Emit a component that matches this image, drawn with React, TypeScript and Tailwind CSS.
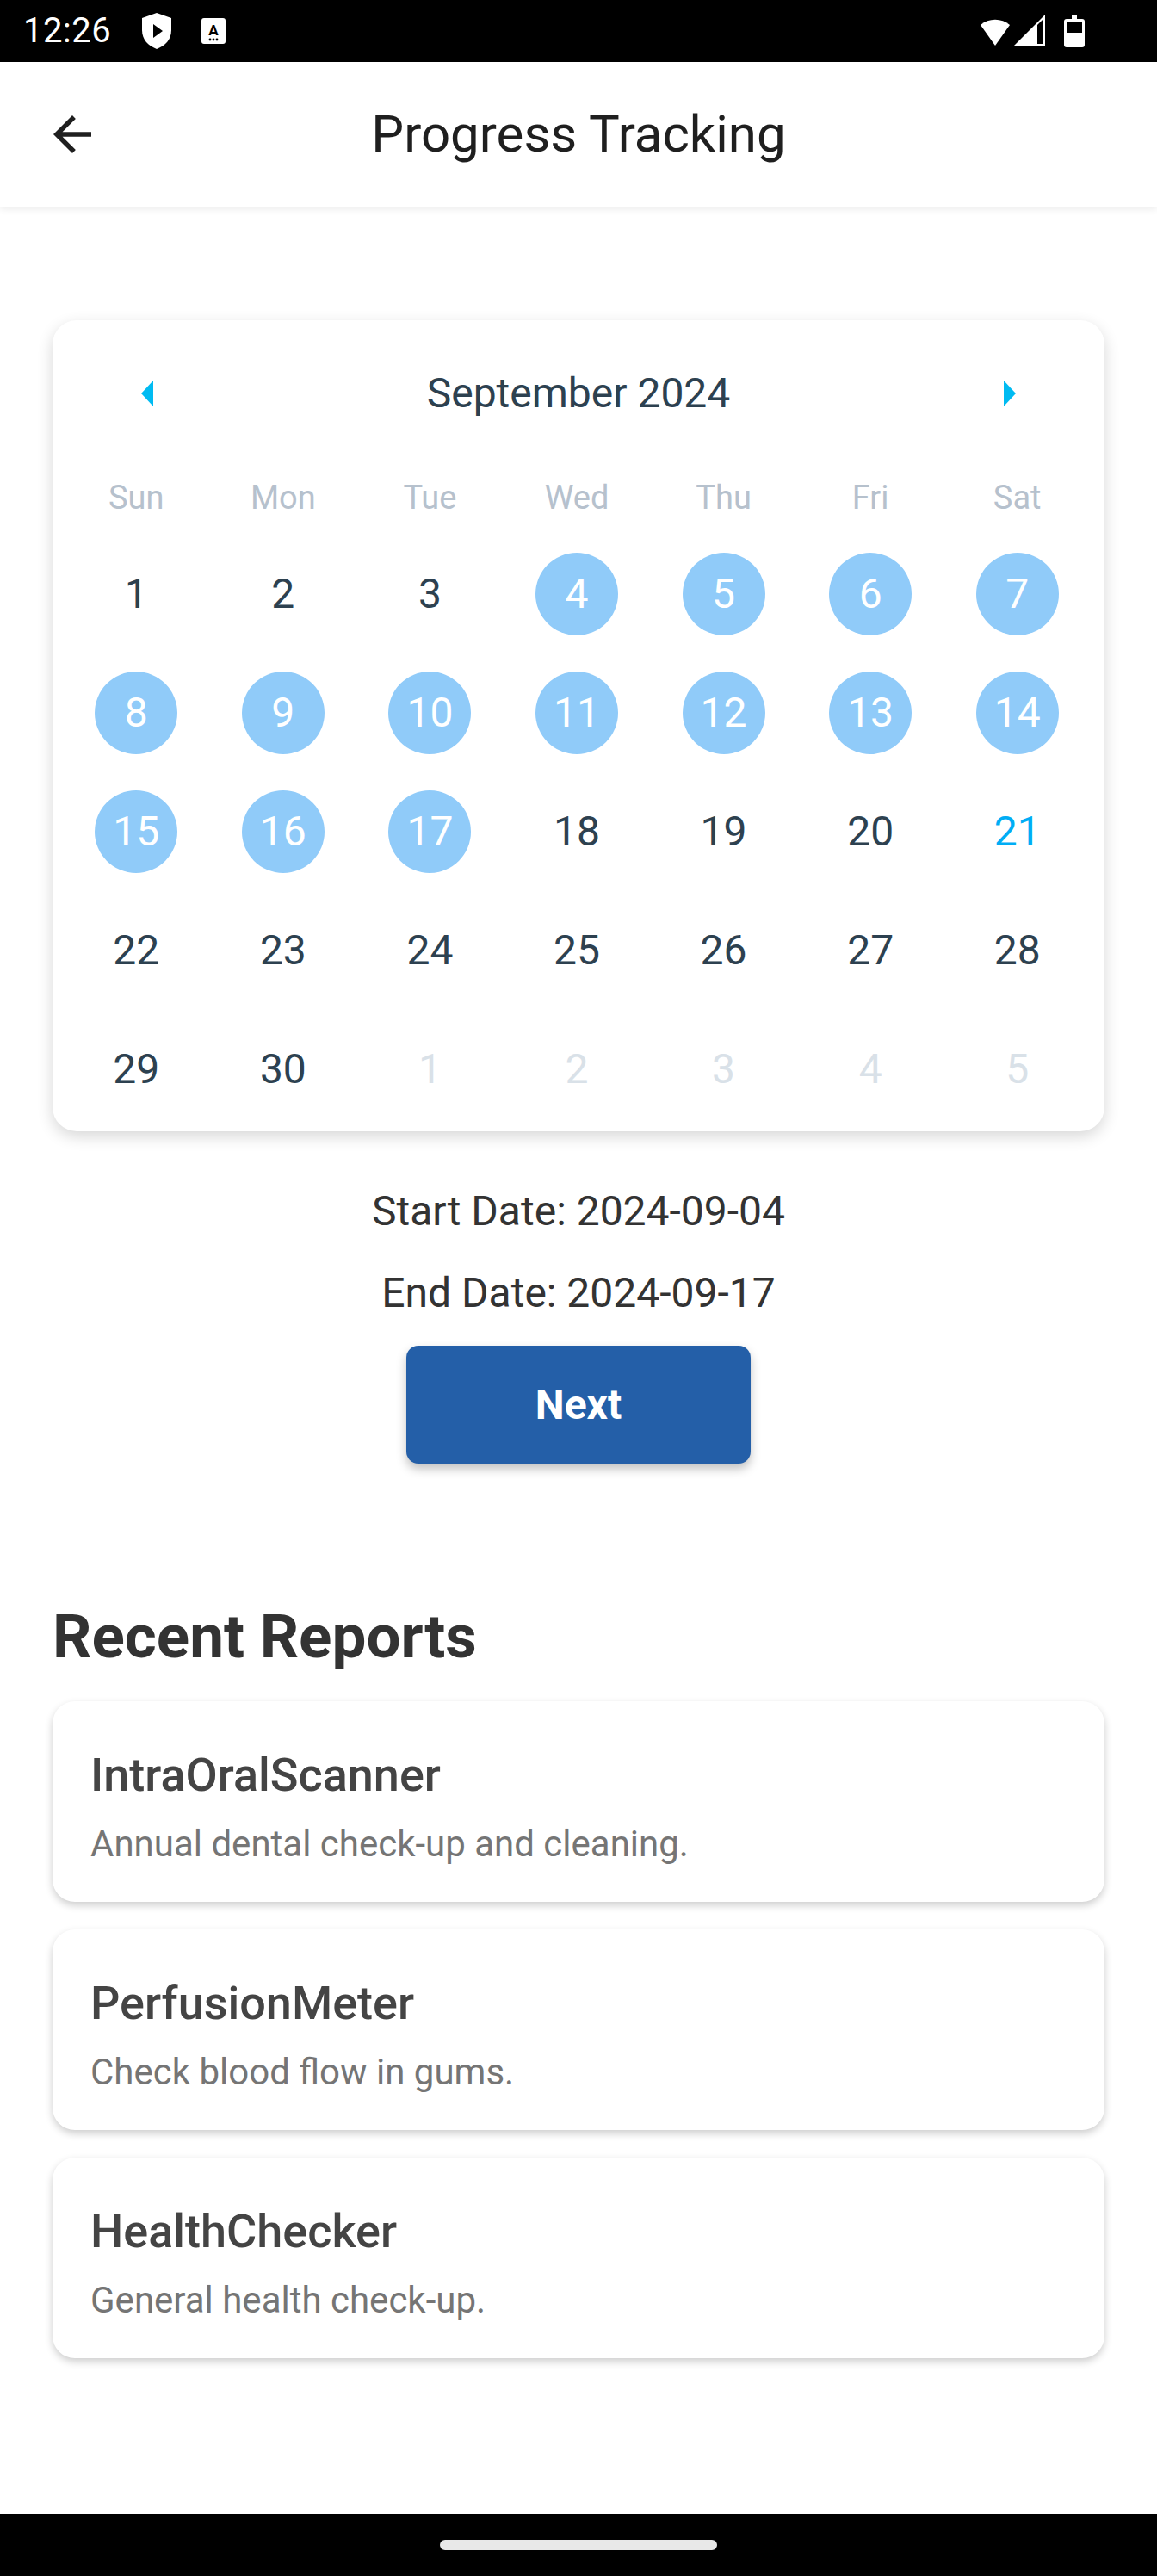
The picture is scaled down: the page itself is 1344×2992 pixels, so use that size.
import React from 'react';

const WEEKDAYS = ['Sun', 'Mon', 'Tue', 'Wed', 'Thu', 'Fri', 'Sat'];

type Day = { n: number; other?: boolean };

const WEEKS: Day[][] = [
  [1, 2, 3, 4, 5, 6, 7].map((n) => ({ n })),
  [8, 9, 10, 11, 12, 13, 14].map((n) => ({ n })),
  [15, 16, 17, 18, 19, 20, 21].map((n) => ({ n })),
  [22, 23, 24, 25, 26, 27, 28].map((n) => ({ n })),
  [{ n: 29 }, { n: 30 }, { n: 1, other: true }, { n: 2, other: true }, { n: 3, other: true }, { n: 4, other: true }, { n: 5, other: true }],
];

const REPORTS = [
  { title: 'IntraOralScanner', description: 'Annual dental check-up and cleaning.' },
  { title: 'PerfusionMeter', description: 'Check blood flow in gums.' },
  { title: 'HealthChecker', description: 'General health check-up.' },
];

const START = 4;
const END = 17;
const TODAY = 21;

const StatusBar: React.FC = () => (
  <div className="h-[72px] bg-black flex items-center pl-[27px] pr-[84px] text-white">
    <span className="text-[40px] leading-none tracking-[0.5px]">12:26</span>
    {/* shield / play */}
    <svg width="34" height="42" viewBox="0 0 34 42" className="ml-[36px]">
      <path d="M17 0 L34 6 V20 C34 31 27 38 17 42 C7 38 0 31 0 20 V6 Z" fill="#fff" />
      <path d="M13 13 L24 21 L13 29 Z" fill="#000" />
    </svg>
    {/* accessibility A box */}
    <svg width="28" height="30" viewBox="0 0 28 30" className="ml-[35px]">
      <rect x="0" y="0" width="28" height="30" rx="3" fill="#fff" />
      <text x="14" y="20" textAnchor="middle" fontFamily="Roboto, sans-serif" fontWeight="700" fontSize="17" fill="#000">A</text>
      <circle cx="10" cy="25" r="1.4" fill="#000" />
      <circle cx="14" cy="25" r="1.4" fill="#000" />
      <circle cx="18" cy="25" r="1.4" fill="#000" />
    </svg>
    <div className="flex-1" />
    {/* wifi */}
    <svg width="34" height="36" viewBox="0 0 34 36">
      <path d="M17 35 L0 11 A26 26 0 0 1 34 11 Z" fill="#fff" />
    </svg>
    {/* signal */}
    <svg width="38" height="38" viewBox="0 0 38 38" className="ml-[4px]">
      <path d="M37 0 V37 H0 Z" fill="#fff" />
      <path d="M28 12 L34 6 V34 H28 Z" fill="#000" />
    </svg>
    {/* battery */}
    <svg width="24" height="38" viewBox="0 0 24 38" className="ml-[21px]">
      <rect x="9" y="0" width="6" height="6" fill="#fff" />
      <rect x="0" y="5" width="24" height="33" rx="3" fill="#fff" />
      <rect x="3" y="8" width="18" height="13" fill="#000" />
    </svg>
  </div>
);

const AppBar: React.FC = () => (
  <div className="h-[168px] bg-white grid grid-cols-[1fr_auto_1fr] items-center shadow-[0_3px_8px_rgba(0,0,0,0.08)] relative z-10">
    <div className="pl-[51px]">
      <svg width="66" height="66" viewBox="0 0 24 24" fill="#1f1f1f">
        <path d="M20 11H7.83l5.59-5.59L12 4l-8 8 8 8 1.41-1.41L7.83 13H20v-2z" />
      </svg>
    </div>
    <h1 className="text-[60px] text-[#1f1f1f] leading-none">Progress Tracking</h1>
    <div />
  </div>
);

const Calendar: React.FC = () => (
  <div className="bg-white rounded-[28px] shadow-[0_6px_18px_rgba(0,0,0,0.16)] pl-[12px] pr-[16px] pt-[37px] pb-[24px]">
    <div className="h-[96px] flex items-center justify-between pl-[84px] pr-[80px]">
      <div className="w-[28px] flex justify-center">
        <svg width="14" height="30" viewBox="0 0 14 30">
          <path d="M14 0 V30 L0 15 Z" fill="#00bbf2" />
        </svg>
      </div>
      <span className="text-[48px] text-[#2d4150] leading-none">September 2024</span>
      <div className="w-[28px] flex justify-center">
        <svg width="14" height="30" viewBox="0 0 14 30">
          <path d="M0 0 V30 L14 15 Z" fill="#00bbf2" />
        </svg>
      </div>
    </div>
    <div className="grid grid-cols-7 mt-[51px] h-[44px] items-center">
      {WEEKDAYS.map((d) => (
        <div key={d} className="text-center text-[38px] leading-none text-[#b6c1cd]">{d}</div>
      ))}
    </div>
    <div className="flex flex-col gap-[42px] mt-[42px]">
      {WEEKS.map((week, wi) => (
        <div key={wi} className="grid grid-cols-7 h-[96px]">
          {week.map((day, di) => {
            const selected = !day.other && day.n >= START && day.n <= END;
            const isToday = !day.other && day.n === TODAY;
            return (
              <div key={di} className="flex items-center justify-center">
                {selected ? (
                  <div className="w-[96px] h-[96px] rounded-full bg-[#90cbf9] flex items-center justify-center text-white text-[48px] leading-none">
                    {day.n}
                  </div>
                ) : (
                  <span
                    className={
                      day.other
                        ? 'text-[48px] leading-none text-[#d9e1e8]'
                        : isToday
                        ? 'text-[48px] leading-none text-[#00adf5]'
                        : 'text-[48px] leading-none text-[#2d4150]'
                    }
                  >
                    {day.n}
                  </span>
                )}
              </div>
            );
          })}
        </div>
      ))}
    </div>
  </div>
);

const ReportCard: React.FC<{ title: string; description: string }> = ({ title, description }) => (
  <div className="bg-white rounded-[26px] shadow-[0_4px_10px_rgba(0,0,0,0.2)] px-[44px] pt-[55px] pb-[42px]">
    <h3 className="text-[54px] leading-[62px] font-medium text-[#444]">{title}</h3>
    <p className="text-[42px] leading-[50px] mt-[24px] text-[#757575]">{description}</p>
  </div>
);

export default function App() {
  return (
    <div className="w-[1344px] h-[2992px] bg-white flex flex-col overflow-hidden font-['Roboto','Liberation_Sans',sans-serif]">
      <StatusBar />
      <AppBar />

      <main className="flex-1 px-[61px] pt-[132px]">
        <Calendar />

        {/* Selected range */}
        <div className="flex flex-col items-center mt-[64px]">
          <p className="text-[48px] leading-[58px] text-[#333]">Start Date: 2024-09-04</p>
          <p className="text-[48px] leading-[58px] text-[#333] mt-[37px]">End Date: 2024-09-17</p>
          <button className="mt-[32px] w-[400px] h-[137px] rounded-[14px] bg-[#245fa8] text-white text-[48px] font-bold shadow-[0_6px_12px_rgba(0,0,0,0.25)]">
            Next
          </button>
        </div>

        {/* Recent reports */}
        <h2 className="mt-[160px] text-[71px] leading-[82px] font-bold text-[#333]">Recent Reports</h2>
        <div className="mt-[34px] flex flex-col gap-[32px]">
          {REPORTS.map((r) => (
            <ReportCard key={r.title} title={r.title} description={r.description} />
          ))}
        </div>
      </main>

      <div className="h-[72px] bg-black flex items-center justify-center shrink-0">
        <div className="w-[322px] h-[12px] rounded-full bg-[#e8e8e8]" />
      </div>
    </div>
  );
}
